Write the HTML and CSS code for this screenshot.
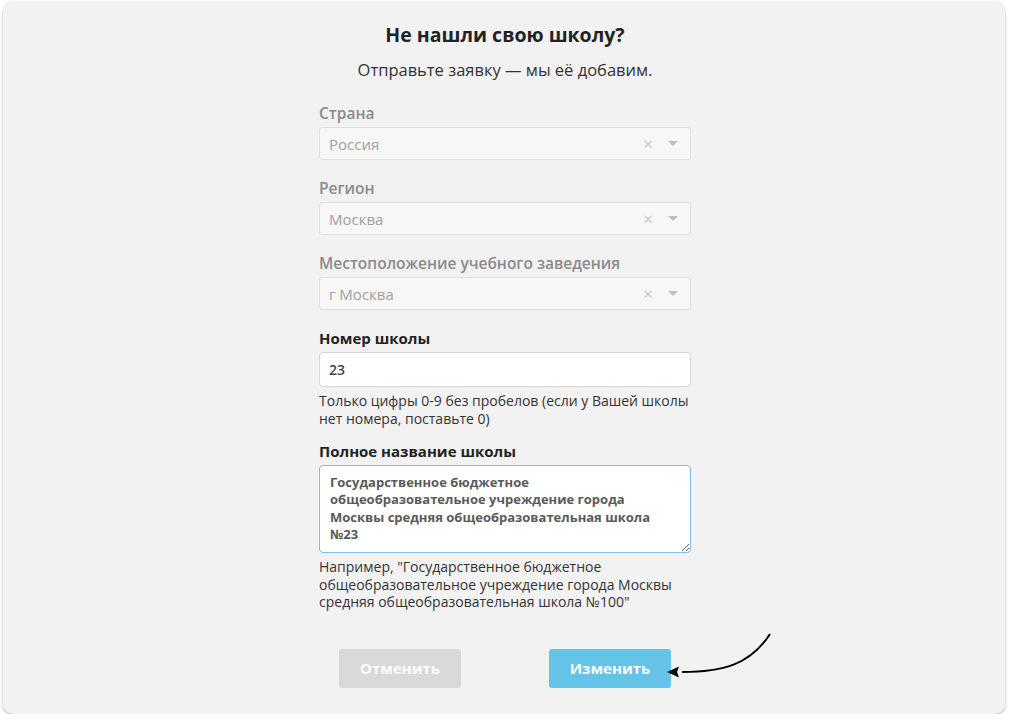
FILE: index.html
```html
<!DOCTYPE html>
<html lang="ru">
<head>
    <meta charset="UTF-8">
    <meta name="viewport" content="width=device-width, initial-scale=1.0">
    <title>Не нашли свою школу?</title>
    <link rel="stylesheet" href="styles.css">
</head>
<body>
    <div class="card">
        <form class="school-form" id="schoolForm">
            <h2>Не нашли свою школу?</h2>
            <p class="subtitle">Отправьте заявку — мы её добавим.</p>

            <label class="label label-muted">Страна</label>
            <div class="select">
                <span class="select-value">Россия</span>
                <span class="select-clear">&times;</span>
                <span class="select-arrow"></span>
            </div>

            <label class="label label-muted">Регион</label>
            <div class="select">
                <span class="select-value">Москва</span>
                <span class="select-clear">&times;</span>
                <span class="select-arrow"></span>
            </div>

            <label class="label label-muted">Местоположение учебного заведения</label>
            <div class="select">
                <span class="select-value">г Москва</span>
                <span class="select-clear">&times;</span>
                <span class="select-arrow"></span>
            </div>

            <label class="label" for="school_number">Номер школы</label>
            <input type="text" id="school_number" name="school_number" value="23">
            <p class="hint">Только цифры 0-9 без пробелов (если у Вашей школы нет номера, поставьте 0)</p>

            <label class="label" for="school_name">Полное название школы</label>
            <textarea id="school_name" name="school_name">Государственное бюджетное общеобразовательное учреждение города Москвы средняя общеобразовательная школа №23</textarea>
            <p class="hint">Например, "Государственное бюджетное общеобразовательное учреждение города Москвы средняя общеобразовательная школа №100"</p>

            <div class="buttons">
                <button type="button" class="btn btn-cancel">Отменить</button>
                <button type="submit" class="btn btn-submit">Изменить</button>
            </div>
        </form>

        <!-- annotation arrow pointing at the submit button -->
        <svg class="pointer" width="120" height="60" viewBox="0 0 120 60">
            <path d="M108 5 C 88 36, 60 43, 20 43" fill="none" stroke="#000" stroke-width="2"/>
            <polygon points="5,43 17,37.5 15,43 17,48.5" fill="#000"/>
        </svg>
    </div>
</body>
</html>
```

FILE: styles.css
```css
body {
    margin: 0;
    background-color: #fff;
    font-family: "Open Sans", "Noto Sans", sans-serif;
    color: #222;
}
.card {
    position: relative;
    box-sizing: border-box;
    width: 1002px;
    height: 712px;
    margin: 2px 0 0 3px;
    padding: 20px 0 0 2px;
    background-color: #f2f2f2;
    border-radius: 10px;
    box-shadow: 0 1px 3px rgba(0, 0, 0, 0.3);
}
.school-form {
    width: 372px;
    margin: 0 auto;
    display: flex;
    flex-direction: column;
}
h2 {
    margin: 0;
    text-align: center;
    font-size: 19.5px;
    line-height: 26px;
    font-weight: 700;
    color: #222;
}
.subtitle {
    margin: 11px 0 0;
    text-align: center;
    font-size: 16.5px;
    line-height: 22px;
    color: #333;
}
.label {
    display: block;
    margin: 18px 0 4px;
    font-size: 15px;
    line-height: 20px;
    font-weight: 700;
    color: #222;
}
.subtitle + .label {
    margin-top: 22px;
}
.label-muted {
    font-size: 15.5px;
    font-weight: 600;
    color: #8a8a8a;
}
.select {
    box-sizing: border-box;
    height: 33px;
    display: flex;
    align-items: center;
    padding: 0 12px 0 9px;
    background-color: #f7f7f7;
    border: 1px solid #e0e0e0;
    border-radius: 3px;
}
.select-value {
    flex: 1;
    font-size: 15px;
    color: #a0a0a0;
}
.select-clear {
    font-size: 17px;
    line-height: 1;
    color: #c8c8c8;
    margin-right: 15px;
}
.select-arrow {
    width: 0;
    height: 0;
    border-left: 5px solid transparent;
    border-right: 5px solid transparent;
    border-top: 5px solid #c0c0c0;
}
input[type="text"] {
    box-sizing: border-box;
    height: 35px;
    padding: 0 9px;
    background-color: #fff;
    border: 1px solid #d6d6d6;
    border-radius: 4px;
    font-family: inherit;
    font-size: 14px;
    font-weight: 600;
    color: #444;
    outline: none;
}
textarea {
    box-sizing: border-box;
    height: 88px;
    padding: 8px 10px 0;
    background-color: #fff;
    border: 1px solid #7fbde4;
    border-radius: 4px;
    font-family: inherit;
    font-size: 13px;
    line-height: 17.3px;
    font-weight: 700;
    color: #5a5a5a;
    outline: none;
    overflow: hidden;
}
.hint {
    margin: 5px 0 0;
    font-size: 14px;
    line-height: 17.5px;
    color: #333;
}
.hint + .label {
    margin-top: 14px;
}
.buttons {
    display: flex;
    justify-content: space-between;
    padding: 0 20px;
    margin-top: 38px;
}
.btn {
    width: 122px;
    height: 39px;
    border: none;
    border-radius: 3px;
    font-family: inherit;
    font-size: 15px;
    font-weight: 700;
    color: #fff;
    cursor: pointer;
}
.btn-cancel {
    background-color: #d9d9d9;
}
.btn-submit {
    background-color: #66c3e8;
}
.pointer {
    position: absolute;
    left: 659px;
    top: 627px;
}
```
